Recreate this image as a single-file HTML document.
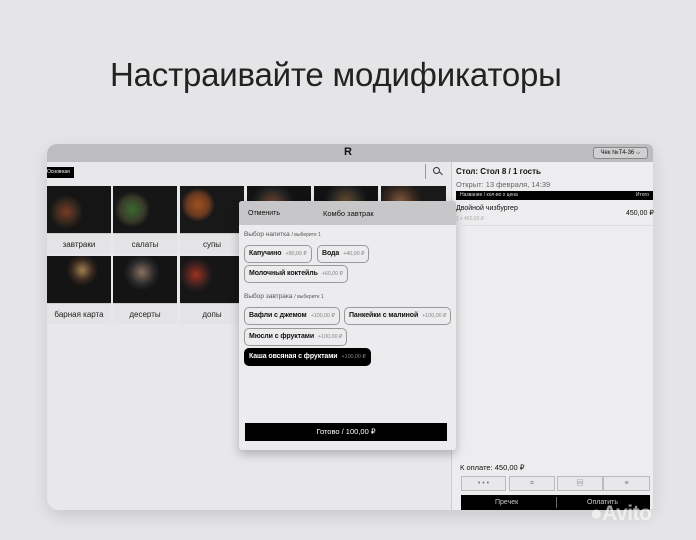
<!DOCTYPE html>
<html><head><meta charset="utf-8"><style>
*{margin:0;padding:0;box-sizing:border-box}
body{width:696px;height:540px;background:#e5e5e7;font-family:"Liberation Sans","Noto Sans CJK SC",sans-serif;position:relative;overflow:hidden;color:#111}
.a{position:absolute}
h1{position:absolute;left:110px;top:56px;font-size:33px;font-weight:400;color:#222;letter-spacing:-0.2px}
.win{left:47px;top:144px;width:606px;height:366px;background:#e8e8ea;border-radius:10px 6px 4px 12px;overflow:hidden;box-shadow:0 6px 16px rgba(0,0,0,.12)}
.top{left:0;top:0;width:606px;height:18px;background:#bdbdc0}
.tile{position:absolute;width:64px;background:#e4e4e6}
.img{height:47px;background:radial-gradient(circle at 30% 55%,#7a3a22 0,#3a2a20 10px,#151515 17px),radial-gradient(circle at 72% 50%,#6a5030 0,#262626 14px,#101418 20px);}
.lbl{height:21px;font-size:8px;text-align:center;line-height:21px;color:#222;border-top:1px solid #ccc}
.chip{position:absolute;height:18px;border:1.5px solid #999;border-radius:5px;font-size:7px;font-weight:700;line-height:15px;padding:0 4px;background:#ececee;white-space:nowrap;letter-spacing:-0.1px}
.chip span{font-weight:400;color:#888;font-size:5.5px;margin-left:4px}
.sec{position:absolute;font-size:6.5px;color:#555}
.sec span{font-size:5px}
.btn{position:absolute;top:476px;height:15px;border:1px solid #bbb;background:#e8e8ea;font-size:7px;color:#777;text-align:center;line-height:13px}
</style></head><body>
<h1>Настраивайте модификаторы</h1>
<div class="a win">
 <div class="a top"></div>
 <div class="a" style="left:297px;top:2px;font-size:11px;font-weight:900;">R</div>
 <div class="a" style="left:546px;top:3px;width:55px;height:12px;border:1px solid #888;border-radius:3px;font-size:6px;line-height:10px;text-align:center;background:#d0d0d2">Чек №Т4-36 ⌵</div>
 <div class="a" style="left:0;top:23px;width:27px;height:11px;background:#000;color:#fff;font-size:5px;line-height:11px">Основная</div>
 <div class="a" style="left:378px;top:20px;width:1px;height:15px;background:#999"></div>
 <div class="a" style="left:386px;top:23px;width:7px;height:7px;border:1.3px solid #333;border-radius:50%"></div>
 <div class="a" style="left:392px;top:29px;width:4px;height:1.3px;background:#333;transform:rotate(45deg)"></div>
 <div class="a" style="left:404px;top:18px;width:202px;height:348px;background:#ededef;border-left:1px solid #ccc"></div>
</div>
<div class="tile" style="left:47px;top:186px"><div class="img"></div><div class="lbl">завтраки</div></div>
<div class="tile" style="left:113px;top:186px"><div class="img" style="background:radial-gradient(circle at 30% 50%,#3a6a30 0,#3a3a2a 12px,#161616 18px),radial-gradient(circle at 72% 50%,#2a4a22 0,#222 14px,#121212 20px)"></div><div class="lbl">салаты</div></div>
<div class="tile" style="left:180px;top:186px"><div class="img" style="background:radial-gradient(circle at 28% 40%,#a05020 0,#6a3a20 11px,#181818 17px),radial-gradient(circle at 78% 70%,#b08030 0,#5a4020 14px,#161616 20px)"></div><div class="lbl">супы</div></div>
<div class="tile" style="left:247px;top:186px"><div class="img" style="background:radial-gradient(circle at 40% 40%,#7a4a30 0,#222 16px,#121212 22px)"></div></div>
<div class="tile" style="left:314px;top:186px"><div class="img" style="background:radial-gradient(circle at 50% 35%,#6a5030 0,#222 16px,#121212 22px)"></div></div>
<div class="tile" style="left:381px;top:186px;width:65px"><div class="img" style="background:radial-gradient(circle at 30% 35%,#8a6040 0,#3a2a20 14px,#1a1a1a 22px)"></div></div>
<div class="tile" style="left:47px;top:256px"><div class="img" style="background:radial-gradient(circle at 55% 30%,#a08050 0,#3a2a20 10px,#141414 16px),radial-gradient(circle at 35% 70%,#8a4a20 0,#2a2020 12px,#121212 20px)"></div><div class="lbl">барная карта</div></div>
<div class="tile" style="left:113px;top:256px"><div class="img" style="background:radial-gradient(circle at 45% 35%,#8a7060 0,#2a2a2a 12px,#141414 18px),radial-gradient(circle at 75% 70%,#8a6050 0,#222 10px,#121212 18px)"></div><div class="lbl">десерты</div></div>
<div class="tile" style="left:180px;top:256px"><div class="img" style="background:radial-gradient(circle at 25% 40%,#a03020 0,#3a2020 11px,#161616 17px),radial-gradient(circle at 70% 70%,#902020 0,#222 10px,#141414 18px)"></div><div class="lbl">допы</div></div>
<div class="a" style="left:239px;top:201px;width:217px;height:249px;background:#ececee;border-radius:3px;box-shadow:0 4px 10px rgba(0,0,0,.25);overflow:hidden">
 <div class="a" style="left:0;top:0;width:217px;height:24px;background:#c7c7c9"></div>
 <div class="a" style="left:9px;top:9px;font-size:7px">Отменить</div>
 <div class="a" style="left:84px;top:8px;font-size:7.5px">Комбо завтрак</div>
</div>
<div class="sec" style="left:244px;top:231px">Выбор напитка <span>/ выберите 1</span></div>
<div class="chip" style="left:244px;top:245px">Капучино<span>+80,00 ₽</span></div>
<div class="chip" style="left:317px;top:245px">Вода<span>+40,00 ₽</span></div>
<div class="chip" style="left:244px;top:265px">Молочный коктейль<span>+60,00 ₽</span></div>
<div class="sec" style="left:244px;top:293px">Выбор завтрака <span>/ выберите 1</span></div>
<div class="chip" style="left:244px;top:307px">Вафли с джемом<span>+100,00 ₽</span></div>
<div class="chip" style="left:344px;top:307px">Панкейки с малиной<span>+100,00 ₽</span></div>
<div class="chip" style="left:244px;top:328px">Мюсли с фруктами<span>+100,00 ₽</span></div>
<div class="chip" style="left:244px;top:348px;background:#000;color:#fff;border-color:#000">Каша овсяная с фруктами<span>+100,00 ₽</span></div>
<div class="a" style="left:245px;top:423px;width:202px;height:18px;background:#000;color:#fff;font-size:7.5px;text-align:center;line-height:18px">Готово / 100,00 ₽</div>
<div class="a" style="left:456px;top:167px;font-size:8px;font-weight:700">Стол: Стол 8 / 1 гость</div>
<div class="a" style="left:456px;top:180px;font-size:7.5px;color:#666">Открыт: 13 февраля, 14:39</div>
<div class="a" style="left:456px;top:191px;width:197px;height:9px;background:#000;color:#ddd;font-size:5px;line-height:9px;padding:0 4px">Название / кол-во x цена<span style="float:right">Итого</span></div>
<div class="a" style="left:456px;top:205px;font-size:7px">Двойной чизбургер</div>
<div class="a" style="left:626px;top:209px;font-size:7px">450,00 ₽</div>
<div class="a" style="left:456px;top:216px;font-size:5px;color:#aaa">1 x 450,00 ₽</div>
<div class="a" style="left:456px;top:225px;width:197px;height:1px;background:#ddd"></div>
<div class="a" style="left:460px;top:463px;font-size:7.5px">К оплате: 450,00 ₽</div>
<div class="btn" style="left:461px;width:45px">• • •</div>
<div class="btn" style="left:509px;width:46px">⌗</div>
<div class="btn" style="left:557px;width:46px">▤</div>
<div class="btn" style="left:603px;width:47px">≡</div>
<div class="a" style="left:461px;top:495px;width:189px;height:15px;background:#000;color:#ccc;font-size:7px;line-height:15px"><span style="position:absolute;left:34px">Пречек</span><span style="position:absolute;left:95px;top:2px;width:1px;height:11px;background:#666"></span><span style="position:absolute;left:126px">Оплатить</span></div>
<div class="a" style="left:590px;top:502px;font-size:21px;font-weight:700;color:rgba(255,255,255,.6);letter-spacing:-0.5px">●Avito</div>
</body></html>
